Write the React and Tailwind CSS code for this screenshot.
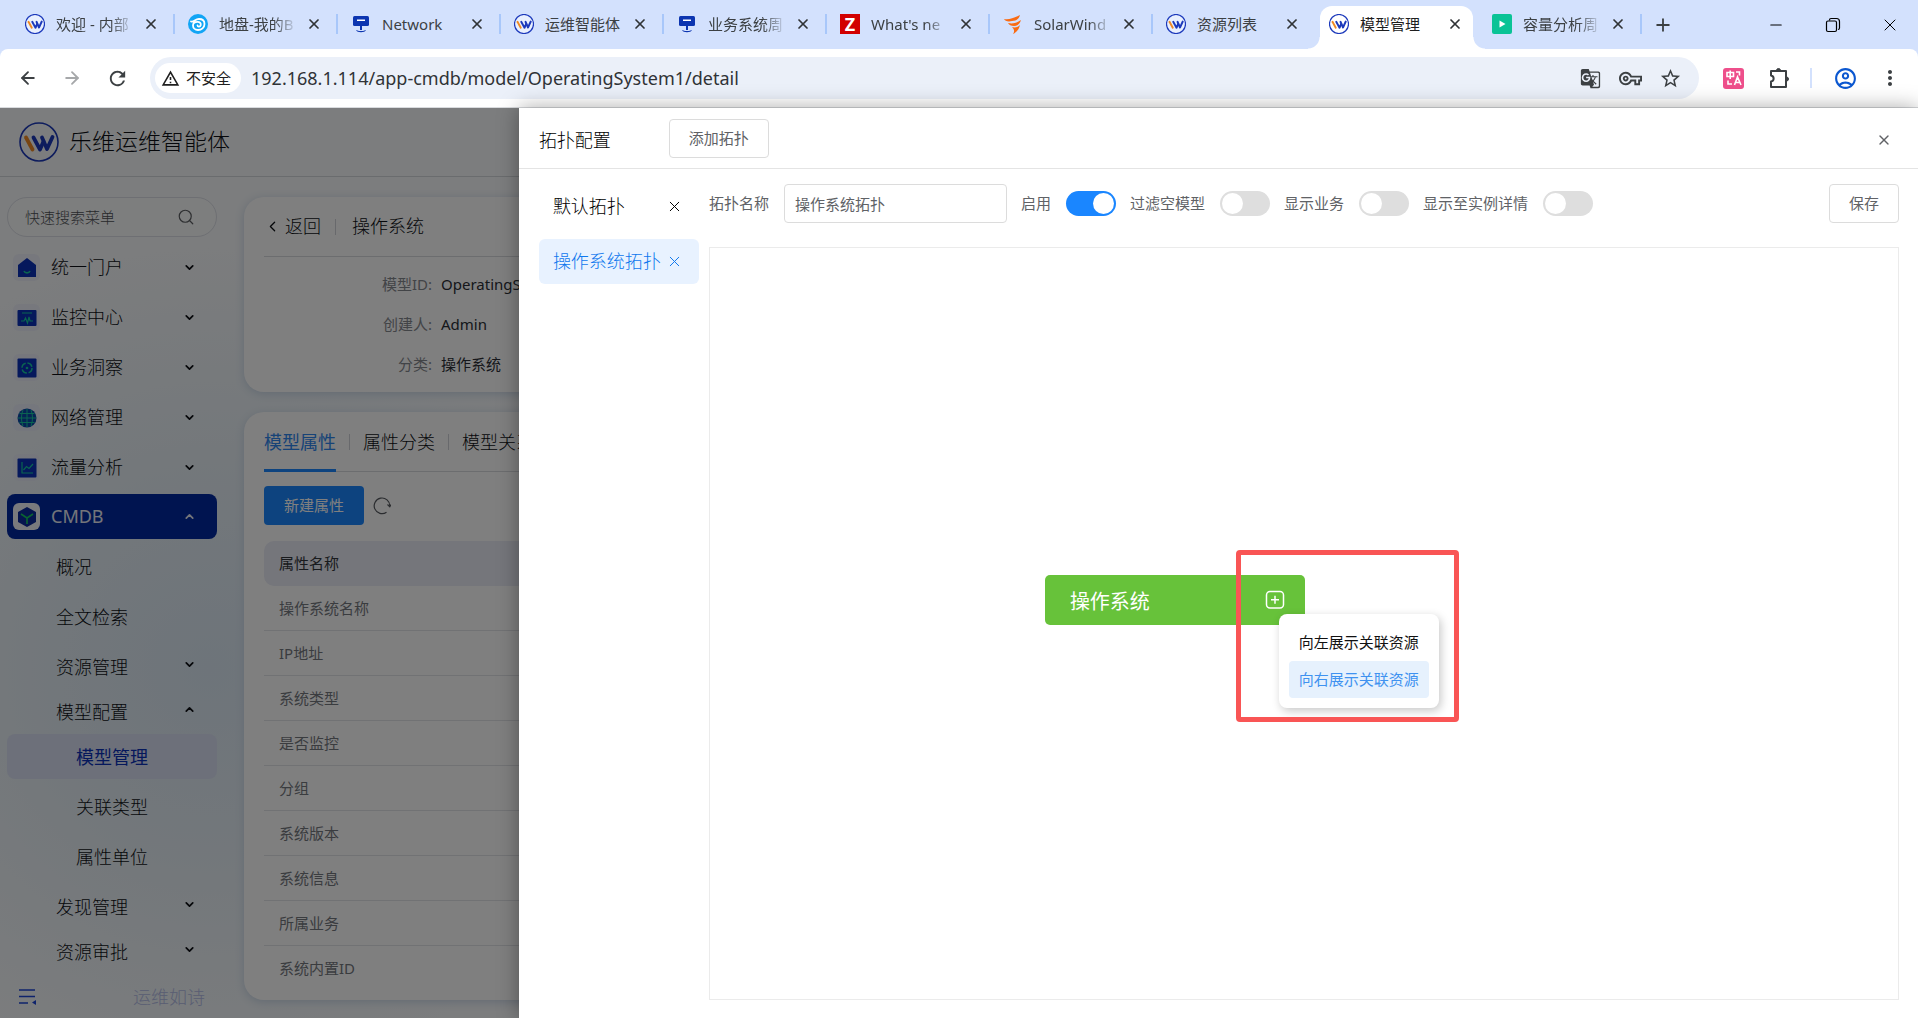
import React from "react";
import { ArrowLeft, ArrowRight, ChevronDown, ChevronLeft, ChevronUp, Minus, Plus, Search, X } from "lucide-react";
import { MdRefresh, MdStarBorder, MdGTranslate, MdOutlineVpnKey, MdOutlineAccountCircle, MdMoreVert, MdOutlineWarningAmber } from "react-icons/md";

function Logo({ className, thin }) {
  return (
    <svg viewBox="0 0 40 40" className={className} fill="none" aria-hidden="true">
      <circle cx="20" cy="20" r="19" fill={thin ? "#fff" : "none"} fillOpacity="0.5" stroke="#1c39bb" strokeWidth={thin ? 2.4 : 1.6} />
      <path d="M7 15.500l6.500 12" stroke="#f08a24" strokeWidth="3.800" strokeLinecap="round" />
      <path d="M14.500 15.500l6.500 12 3.500-8" stroke="#1c39bb" strokeWidth="3.800" strokeLinecap="round" strokeLinejoin="round" />
      <path d="M23 15.500l5 11.500 5.500-12" stroke="#1c39bb" strokeWidth="3.800" strokeLinecap="round" strokeLinejoin="round" />
    </svg>
  );
}

function Favicon({ kind }) {
  if (kind === "logo") return <Logo thin className="size-5 shrink-0" />;
  if (kind === "swirl")
    return (
      <svg viewBox="0 0 20 20" className="size-5 shrink-0" fill="none" aria-hidden="true">
        <circle cx="10" cy="10" r="10" fill="#12a5f5" />
        <path d="M3 7.500c3 1 4-2.500 8-2.500 3.500 0 5.500 2 5.500 5 0 3.500-3 6-6.500 6-3 0-5-2-5-4.500S7 7.800 9.500 7.800s3.700 1.700 3.200 3.400-3 1.800-3.200.3" stroke="#fff" strokeWidth="1.800" strokeLinecap="round" />
      </svg>
    );
  if (kind === "net")
    return (
      <svg viewBox="0 0 20 20" className="size-5 shrink-0" aria-hidden="true">
        <rect x="2" y="2" width="16" height="10" rx="1.500" fill="#0c35b0" />
        <rect x="6" y="5.500" width="8" height="1.500" fill="#fff" />
        <path d="M9 12h2v4H9z" fill="#0c35b0" />
        <path d="M5 16c1 3 9 3 10 0l-3 1H8z" fill="#0c35b0" />
      </svg>
    );
  if (kind === "z")
    return <span className="flex size-5 shrink-0 items-center justify-center bg-[#d20000] text-[18px] leading-5 font-bold text-white">Z</span>;
  if (kind === "solar")
    return (
      <svg viewBox="0 0 20 20" className="size-5 shrink-0" fill="#f96b13" aria-hidden="true">
        <path d="M1 5c5 1 10-1 16-4-1 4-4 6-8 6C5 8 2 7 1 5z" />
        <path d="M5 9c5 1 9 0 13-3-1 4-4 6-7 6-3 0-5-1-6-3z" />
        <path d="M9 13c3 1 6 0 8-2-1 4-3 7-7 9 2-3 1-5-1-7z" />
      </svg>
    );
  return (
    <svg viewBox="0 0 20 20" className="size-5 shrink-0" aria-hidden="true">
      <rect width="20" height="20" rx="2" fill="#0ac396" />
      <path d="M7.500 6.500l6 3.500-6 3.500z" fill="#fff" />
    </svg>
  );
}

const tabs = [
  ["logo", "欢迎 - 内部", true],
  ["swirl", "地盘-我的B", true],
  ["net", "Network"],
  ["logo", "运维智能体"],
  ["net", "业务系统周", true],
  ["z", "What's ne", true],
  ["solar", "SolarWind", true],
  ["logo", "资源列表"],
  ["logo", "模型管理"],
  ["play", "容量分析周", true],
];
const ACTIVE = 8;

function Tab({ kind, title, fade, index }) {
  const active = index === ACTIVE;
  const bar = index !== ACTIVE && index !== ACTIVE - 1;
  return (
    <div className="relative flex w-[163px] shrink-0 items-end">
      {active && (
        <>
          <span className="absolute bottom-0 -left-2.5 size-3 bg-[radial-gradient(circle_at_0_0,#d3e1fd_11px,#fff_12px)]" />
          <span className="absolute -right-1 bottom-0 size-3 bg-[radial-gradient(circle_at_100%_0,#d3e1fd_11px,#fff_12px)]" />
        </>
      )}
      <div className={active ? "mr-2 ml-0.5 flex h-[43px] min-w-0 flex-1 items-center rounded-t-xl bg-white pb-2 pl-[9px]" : "ml-0.5 flex h-[43px] min-w-0 flex-1 items-center pb-2 pl-[9px]"}>
        <Favicon kind={kind} />
        <span
          className={
            fade
              ? "ml-[11px] w-[78px] mask-r-from-70% mask-r-to-100% text-[15px] leading-6 whitespace-nowrap text-[#3c4043]"
              : active
                ? "ml-[11px] w-[78px] text-[15px] leading-6 whitespace-nowrap text-[#1f1f1f]"
                : "ml-[11px] w-[78px] text-[15px] leading-6 whitespace-nowrap text-[#3c4043]"
          }
        >
          {title}
        </span>
        <button aria-label={"关闭 " + title} className="ml-[7px] flex size-5 items-center justify-center">
          <X className="size-4 text-[#303336]" strokeWidth={2.6} />
        </button>
      </div>
      {bar && <span className="absolute top-[14px] right-0.5 h-[20px] w-0.5 bg-[#a8c7fa]" />}
    </div>
  );
}

function Browser() {
  return (
    <header className="text-[#3c4043]">
      <div className="flex h-[49px] bg-[#d3e1fd] pl-3.5">
        {tabs.map(([kind, title, fade], i) => (
          <Tab key={i} kind={kind} title={title} fade={fade} index={i} />
        ))}
        <button aria-label="新标签页" className="ml-[7px] flex w-6 items-center justify-center">
          <Plus className="size-5" strokeWidth={2.2} />
        </button>
        <div className="ml-auto flex items-center text-black">
          <button aria-label="最小化" className="flex w-[57px] justify-center"><Minus className="size-[18px]" strokeWidth={1.4} /></button>
          <button aria-label="还原" className="flex w-[57px] justify-center">
            <svg viewBox="0 0 16 16" className="size-4" fill="none" stroke="currentColor" strokeWidth="1.200" aria-hidden="true">
              <rect x="1.500" y="4" width="10" height="10.500" rx="1.500" />
              <path d="M4.500 3.500V3c0-1 .500-1.500 1.500-1.500h5.500c2 0 3 1 3 3V11c0 1-.500 1.500-1.500 1.500" />
            </svg>
          </button>
          <button aria-label="关闭窗口" className="flex w-[57px] justify-center"><X className="size-5" strokeWidth={1.2} /></button>
        </div>
      </div>
      <div className="flex h-[59px] items-center rounded-t-lg border-b border-[#d9dbde] bg-white pr-4 pl-[18px]">
        <button aria-label="后退"><ArrowLeft className="size-5" strokeWidth={2.2} /></button>
        <button aria-label="前进" className="ml-6 text-[#a6a8aa]"><ArrowRight className="size-5" strokeWidth={2.2} /></button>
        <button aria-label="重新加载" className="ml-6"><MdRefresh className="size-[23px]" /></button>
        <div className="ml-[21px] flex h-[42px] min-w-0 flex-1 items-center rounded-full bg-[#ebf0f9] pr-[17px] pl-[5px]">
          <button className="flex h-[30px] items-center gap-1.5 rounded-full bg-white px-1.5 text-[15px] text-[#1f1f1f]">
            <MdOutlineWarningAmber className="size-[19px]" />
            <span className="pr-1">不安全</span>
          </button>
          <input
            aria-label="地址"
            defaultValue="192.168.1.114/app-cmdb/model/OperatingSystem1/detail"
            className="ml-2.5 min-w-0 flex-1 bg-transparent text-[18px] text-[#303336] outline-none"
          />
          <button aria-label="翻译"><MdGTranslate className="size-[21px]" /></button>
          <button aria-label="密码" className="ml-[18px]"><MdOutlineVpnKey className="size-[23px]" /></button>
          <button aria-label="收藏" className="ml-[17px]"><MdStarBorder className="size-[23px]" /></button>
        </div>
        <button aria-label="翻译扩展" className="ml-6 flex size-[21px] items-center justify-center rounded-[3px] bg-[#ee4f8b] text-white">
          <svg viewBox="0 0 20 20" className="size-5" fill="none" stroke="currentColor" strokeWidth="1.600" aria-hidden="true">
            <path d="M3 4.500h6.500v4H3zM6.200 2.500v8.500M12 4h3.500v3.500M4 12.500v3.500h4M10.500 17l3-8 3.500 8M11.500 14.500h4.500" />
          </svg>
        </button>
        <button aria-label="扩展程序" className="ml-6">
          <svg viewBox="0 0 24 24" className="size-6" fill="none" stroke="currentColor" strokeWidth="2" strokeLinejoin="round" aria-hidden="true">
            <path d="M3 5h15v16H3v-5.500c3.500-.500 3.500-5.500 0-6z" />
            <path d="M8.500 4.500a2 2 0 0 1 4 0zM18.500 11a2 2 0 0 1 0 4z" fill="currentColor" strokeWidth="1" />
          </svg>
        </button>
        <span className="ml-[18px] h-5 w-0.5 bg-[#d3e1fd]" />
        <button aria-label="个人资料" className="ml-[21px] text-[#0b57d0]"><MdOutlineAccountCircle className="size-[25px]" /></button>
        <button aria-label="菜单" className="ml-5"><MdMoreVert className="size-6" /></button>
      </div>
    </header>
  );
}

function MenuIcon({ kind }) {
  const common = { viewBox: "0 0 20 20", className: "size-5", fill: "none", "aria-hidden": true };
  const g = { stroke: "#14c8a0", strokeWidth: 1.2 };
  if (kind === "home")
    return <svg {...common}><path d="M1 7l9-7 9 7v12H1z" fill="#0a30b8" /><path d="M7 13c1 2.500 5 2.500 6 0" {...g} strokeWidth="1.600" /></svg>;
  if (kind === "monitor")
    return <svg {...common}><rect x="0.500" y="2" width="19" height="16" rx="1" fill="#0a30b8" /><path d="M5 5h10M4 13h3l1.500-3 2 5 1.500-6 1 4h3" {...g} /></svg>;
  if (kind === "insight")
    return <svg {...common}><rect x="0.500" y="0.500" width="19" height="19" rx="1" fill="#0a30b8" /><circle cx="10" cy="10" r="5" {...g} strokeWidth="1.500" strokeDasharray="6 1.800" /><circle cx="10" cy="10" r="1.300" fill="#14c8a0" /></svg>;
  if (kind === "globe")
    return <svg {...common}><circle cx="10" cy="10" r="9.500" fill="#0a48a8" /><path d="M10 1v18M1 10h18M2.500 5.500h15M2.500 14.500h15M6 2c-2 5-2 11 0 16M14 2c2 5 2 11 0 16" {...g} strokeWidth="1" /></svg>;
  if (kind === "chart")
    return <svg {...common}><rect x="0.500" y="0.500" width="19" height="19" rx="1" fill="#0a30b8" /><path d="M5 4v11h11M6.500 12l3-3.500 2.500 2 4-4.500" {...g} /></svg>;
  return <svg {...common}><path d="M10 0l9 5v10l-9 5-9-5V5z" fill="#0a2a9c" /><path d="M4 7l6 4 6-4M10 11v6" stroke="#14c860" strokeWidth="1.600" /></svg>;
}

const topMenu = [
  ["home", "统一门户"],
  ["monitor", "监控中心"],
  ["insight", "业务洞察"],
  ["globe", "网络管理"],
  ["chart", "流量分析"],
];

function SubItem({ label, open, group }) {
  return (
    <button className={group ? "flex h-[45px] w-full items-center justify-between pt-0.5 pr-[21px] pl-[49px]" : "mb-[5px] flex h-[45px] w-full items-center pt-0.5 pl-[49px]"}>
      {label}
      {group && (open ? <ChevronUp className="mb-1.5 size-[13px]" strokeWidth={3.2} /> : <ChevronDown className="mb-1.5 size-[13px]" strokeWidth={3.2} />)}
    </button>
  );
}

function Sidebar() {
  return (
    <nav className="flex w-[224px] shrink-0 flex-col px-[7px] pt-5 text-[18px] font-light text-[#0c0f14]">
      <label className="mb-[7px] flex h-10 items-center rounded-full border border-[#dcdfe6] bg-white/40 pr-[21px] pl-[17px]">
        <input aria-label="快速搜索菜单" placeholder="快速搜索菜单" className="min-w-0 flex-1 bg-transparent text-[15px] outline-none placeholder:text-[#4f5256]" />
        <Search className="size-[18px] text-[#5c5f63]" strokeWidth={1.6} />
      </label>
      {topMenu.map(([kind, label]) => (
        <button key={label} className="mb-[5px] flex h-[45px] items-center pt-0.5 pr-[21px] pl-1.5">
          <span className="flex size-[27px] items-center justify-center rounded-md bg-[#e8eafa]/60"><MenuIcon kind={kind} /></span>
          <span className="ml-[11px]">{label}</span>
          <ChevronDown className="ml-auto size-[13px]" strokeWidth={3.2} />
        </button>
      ))}
      <button className="mb-[5px] flex h-[45px] items-center rounded-lg bg-[#0028a0] pr-[21px] pl-1.5 font-normal text-[#e8ebf5]">
        <span className="flex size-[27px] items-center justify-center rounded-md bg-[#f2f4fb]"><MenuIcon kind="cube" /></span>
        <span className="ml-[11px]">CMDB</span>
        <ChevronUp className="ml-auto size-[13px]" strokeWidth={3.2} />
      </button>
      <SubItem label="概况" />
      <SubItem label="全文检索" />
      <SubItem label="资源管理" group />
      <SubItem label="模型配置" group open />
      <button className="mb-[5px] flex h-[45px] items-center rounded-lg bg-[#dae1f4] pt-0.5 pl-[69px] font-normal text-[#0a30b8]">模型管理</button>
      <button className="mb-[5px] flex h-[45px] items-center pt-0.5 pl-[69px]">关联类型</button>
      <button className="mb-[5px] flex h-[45px] items-center pt-0.5 pl-[69px]">属性单位</button>
      <SubItem label="发现管理" group />
      <SubItem label="资源审批" group />
      <div className="flex h-[44px] items-center justify-between pt-0.5 pr-3 pl-3">
        <button aria-label="收起菜单">
          <svg viewBox="0 0 18 18" className="size-[18px]" fill="none" stroke="#1c46d8" strokeWidth="1.600" aria-hidden="true">
            <path d="M0 2h16M0 8.500h16M0 15h9" />
            <path d="M17 12v5l-4-2.500z" fill="#1c46d8" stroke="none" />
          </svg>
        </button>
        <span className="text-[#b4bce6]">运维如诗</span>
      </div>
    </nav>
  );
}

const attrs = ["操作系统名称", "IP地址", "系统类型", "是否监控", "分组", "系统版本", "系统信息", "所属业务", "系统内置ID"];
const details = [["模型ID:", "OperatingSystem1"], ["创建人:", "Admin"], ["分类:", "操作系统"]];

function Backdrop() {
  return (
    <div className="flex min-h-[910px] flex-col bg-[#f8fafc] bg-[radial-gradient(circle_at_210px_560px,#dce9f5_0,#e6eff6_180px,transparent_420px)]">
      <div className="flex h-[69px] items-center gap-2.5 border-b border-[#d5d8dc] pl-[19px] text-[23px] font-light text-[#0c0f14]">
        <Logo className="size-10" />
        <span className="pb-0.5">乐维运维智能体</span>
      </div>
      <div className="flex flex-1">
        <Sidebar />
        <main className="flex min-w-0 flex-1 flex-col gap-5 px-5 pt-5 pb-[18px]">
          <section className="h-[195px] rounded-[20px] bg-white px-5 shadow-[0_2px_10px_#c8d6e6]">
            <div className="flex h-[60px] items-center border-b border-[#d8dade] text-[18px] font-light text-[#0c0f14]">
              <button className="flex items-center gap-1"><ChevronLeft className="size-[17px]" strokeWidth={1.8} />返回</button>
              <span className="mr-4 ml-3.5 h-4 w-px bg-[#d0d3d8]" />
              操作系统
            </div>
            <dl className="mt-[7px] text-[15px]">
              {details.map(([k, v]) => (
                <div key={k} className="flex h-10 items-center gap-[9px]">
                  <dt className="w-[168px] text-right text-[#85888e]">{k}</dt>
                  <dd className="text-[#2c2f36]">{v}</dd>
                </div>
              ))}
            </dl>
          </section>
          <section className="flex-1 rounded-[20px] bg-white px-5 shadow-[0_2px_10px_#c8d6e6]">
            <div className="flex h-[60px] border-b border-[#d8dade] text-[18px] font-light text-[#0c0f14]">
              <button className="-mb-px flex h-[60px] items-center border-b-[3px] border-[#1a86ff] pt-1 font-normal text-[#2f86ee]">模型属性</button>
              <span className="mx-[13px] mt-[22px] h-4 w-px bg-[#d0d3d8]" />
              <button className="pt-0.5">属性分类</button>
              <span className="mx-[13px] mt-[22px] h-4 w-px bg-[#d0d3d8]" />
              <button className="pt-0.5">模型关系</button>
            </div>
            <div className="flex items-center gap-[9px] pt-3.5 pb-4">
              <button className="h-[39px] w-[100px] rounded bg-[#1a86ff] text-[15px] text-white">新建属性</button>
              <button aria-label="刷新">
                <svg viewBox="0 0 18 18" className="size-[18px]" fill="none" stroke="#55585e" strokeWidth="1.200" aria-hidden="true">
                  <path d="M13.500 15.200A7.800 7.800 0 1 1 16.800 9" />
                  <path d="M14.500 7.500l2.300 2.300L18 7.500" />
                </svg>
              </button>
            </div>
            <table className="w-full border-separate border-spacing-0 text-left text-[15px]">
              <thead>
                <tr><th className="h-[45px] rounded-[10px] bg-[#eaecf6] pl-[15px] font-normal text-[#33363c]">属性名称</th></tr>
              </thead>
              <tbody>
                {attrs.map((a) => (
                  <tr key={a} className="group"><td className="h-[45px] border-b border-[#e2e4e9] pl-[15px] text-[#75787e] group-last:border-0">{a}</td></tr>
                ))}
              </tbody>
            </table>
          </section>
        </main>
      </div>
    </div>
  );
}

function Toggle({ label, checked }) {
  return (
    <label className="flex items-center gap-[15px] whitespace-nowrap">
      {label}
      <input
        type="checkbox"
        role="switch"
        defaultChecked={checked}
        className="h-[25px] w-[50px] appearance-none rounded-full bg-[#dedede] p-0.5 before:block before:size-[21px] before:rounded-full before:bg-white checked:bg-[#1a86ff] checked:before:translate-x-[25px]"
      />
    </label>
  );
}

function Drawer() {
  return (
    <aside className="absolute inset-y-0 right-0 flex w-[calc(73%-1px)] flex-col bg-white shadow-[0_0_20px_rgba(0,0,0,0.35)]">
      <div className="flex h-[61px] items-center border-b border-[#e4e4e4] pr-[26px] pl-5">
        <h1 className="w-[130px] pt-1 text-[18px] font-light text-black">拓扑配置</h1>
        <button className="h-[39px] w-[100px] rounded border border-[#dcdcdc] text-[15px] text-[#606266]">添加拓扑</button>
        <button aria-label="关闭" className="ml-auto pt-1"><X className="size-4 text-[#606266]" strokeWidth={2} /></button>
      </div>
      <div className="flex flex-1 gap-2.5 pt-[15px] pr-[19px] pb-[18px] pl-5">
        <div className="flex w-[160px] shrink-0 flex-col gap-2.5 text-[18px] font-light">
          <div className="flex h-[45px] items-center justify-between pr-4 pl-3.5 text-black">
            默认拓扑<button aria-label="删除默认拓扑"><X className="size-[17px]" strokeWidth={1.4} /></button>
          </div>
          <div className="flex h-[45px] items-center justify-between rounded-md bg-[#e8f2ff] pr-4 pl-3.5 text-[#0f78ee]">
            操作系统拓扑<button aria-label="删除操作系统拓扑"><X className="size-[17px]" strokeWidth={1.4} /></button>
          </div>
        </div>
        <div className="flex min-w-0 flex-1 flex-col gap-6">
          <div className="flex items-center gap-[14px] text-[15px] text-[#606266]">
            <label className="flex items-center gap-[15px]">
              拓扑名称
              <input defaultValue="操作系统拓扑" className="h-[39px] w-[223px] rounded border border-[#dcdcdc] px-2.5 outline-none" />
            </label>
            <Toggle label="启用" checked />
            <Toggle label="过滤空模型" />
            <Toggle label="显示业务" />
            <Toggle label="显示至实例详情" />
            <button className="ml-auto h-[39px] w-[70px] rounded border border-[#dcdcdc]">保存</button>
          </div>
          <div className="relative flex-1 border border-[#ebebeb]">
            <div className="absolute top-[327px] left-[335px] flex h-[50px] w-[260px] items-center justify-between rounded-[5px] bg-[#67c23a] pr-5 pl-[25px] text-[20px] text-white">
              <span className="pt-1">操作系统</span>
              <button aria-label="展开关联资源">
                <svg viewBox="0 0 20 20" className="size-5" fill="none" stroke="currentColor" strokeWidth="1.500" aria-hidden="true">
                  <rect x="1.500" y="1.500" width="17" height="16.500" rx="3.500" />
                  <path d="M10 5.800v8M6 9.800h8" />
                </svg>
              </button>
            </div>
            <div className="absolute top-[366px] left-[569px] w-[160px] rounded-lg bg-white p-2.5 text-[15px] text-[#111] shadow-[2px_3px_10px_rgba(0,0,0,0.22)]">
              <button className="block h-[37px] w-full rounded">向左展示关联资源</button>
              <button className="block h-[37px] w-full rounded bg-[#e6f1fd] text-[#3f92f0]">向右展示关联资源</button>
            </div>
            <div className="pointer-events-none absolute top-[302px] left-[526px] h-[172px] w-[223px] rounded-sm border-[5px] border-[#f95555]" />
          </div>
        </div>
      </div>
    </aside>
  );
}

export default function App() {
  return (
    <div className="flex min-h-screen flex-col overflow-hidden bg-[#d3e1fd] font-['Noto_Sans','Noto_Sans_CJK_SC',sans-serif]">
      <Browser />
      <div className="relative flex-1">
        <Backdrop />
        <div className="absolute inset-0 bg-black/50" />
        <Drawer />
      </div>
    </div>
  );
}
